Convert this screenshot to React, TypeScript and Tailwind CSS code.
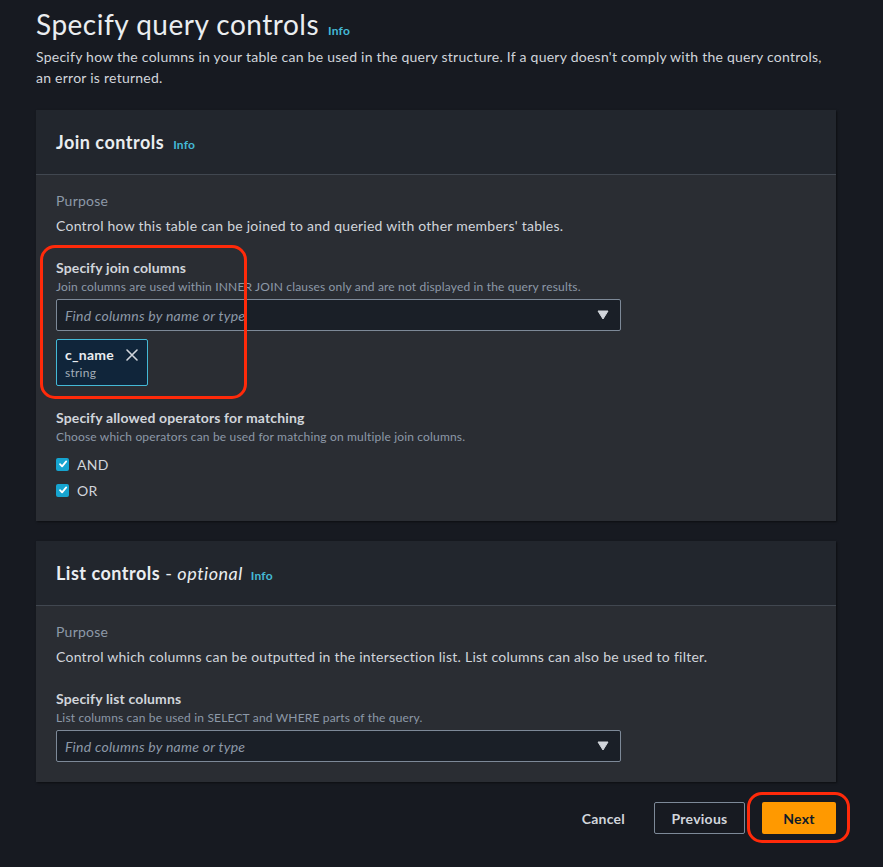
import React from "react";

const font = { fontFamily: "Lato, 'Open Sans', Arial, sans-serif" };

function Info({ ml = "ml-[9px]" }: { ml?: string }) {
  return <span className={`text-[12px] leading-none font-bold tracking-[0.2px] text-[#44b9d6] ${ml}`}>Info</span>;
}

function Caret() {
  return (
    <svg width="12" height="10" viewBox="0 0 12 10" className="text-[#d1d5db]">
      <path d="M1 1 H11 L6 9 Z" fill="currentColor" stroke="currentColor" strokeWidth="1" strokeLinejoin="round" />
    </svg>
  );
}

function Select() {
  return (
    <div className="h-8 w-[565px] border border-[#7d8998] bg-[#1a1f27] rounded-[2px] flex items-center justify-between pl-2 pr-[11px]">
      <span className="italic text-[14px] text-[#8d99a8]">Find columns by name or type</span>
      <Caret />
    </div>
  );
}

function Check({ label }: { label: string }) {
  return (
    <div className="flex items-center h-[22px] gap-[8px]">
      <div className="w-[13px] h-[13px] bg-[#16a4d0] rounded-[2px] flex items-center justify-center">
        <svg width="10" height="10" viewBox="0 0 10 10">
          <path d="M2 5.2 L4.1 7.4 L8.2 2.4" fill="none" stroke="white" strokeWidth="1.8" strokeLinecap="round" strokeLinejoin="round" />
        </svg>
      </div>
      <span className="text-[14px] text-[#d1d5db]">{label}</span>
    </div>
  );
}

export default function App() {
  return (
    <div style={font} className="min-h-[867px] w-[883px] bg-[#171a21] pl-9 pr-[47px] pt-[6px] text-[#d1d5db] tracking-[0.25px]">
      <h1 className="text-[28px] leading-[36px] text-[#eaedf0] font-normal tracking-[0.5px]">
        Specify query controls<Info />
      </h1>
      <p className="mt-[4px] text-[14px] leading-[21px] text-[#d1d5db]">
        Specify how the columns in your table can be used in the query structure. If a query doesn't comply with the query controls, an error is returned.
      </p>

      {/* Join controls */}
      <div className="mt-[22px] w-[800px] shadow-[1px_1px_2px_rgba(0,0,0,0.5)]">
        <div className="bg-[#22262d] px-5 py-[21px] border-b border-[#414750]">
          <h2 className="text-[18px] leading-[22px] font-bold text-[#eaedf0] tracking-[0.5px]">
            Join controls<Info />
          </h2>
        </div>
        <div className="bg-[#2a2d33] px-5 pt-[15px] pb-5 relative">
          <div className="text-[14px] leading-[22px] text-[#8d99a8]">Purpose</div>
          <div className="mt-[3px] text-[14px] leading-[22px] text-[#d1d5db]">
            Control how this table can be joined to and queried with other members' tables.
          </div>
          <div className="mt-5 text-[14px] leading-[22px] font-bold tracking-[0.15px] text-[#d1d5db]">Specify join columns</div>
          <div className="text-[12px] leading-[16px] tracking-[0.17px] text-[#8d99a8]">
            Join columns are used within INNER JOIN clauses only and are not displayed in the query results.
          </div>
          <div className="mt-1">
            <Select />
          </div>
          <div className="mt-2 w-[92px] h-[47px] border border-[#44b9d6] bg-[#10253a] rounded-[2px] px-2 pt-[4px]">
            <div className="flex items-center justify-between">
              <span className="text-[14px] leading-[22px] font-bold text-[#eaedf0]">c_name</span>
              <svg width="14" height="14" viewBox="0 0 14 14">
                <path d="M2 2 L12 12 M12 2 L2 12" stroke="#d1d5db" strokeWidth="1.6" strokeLinecap="round" />
              </svg>
            </div>
            <div className="text-[12px] leading-[14px] text-[#a4aeb8]">string</div>
          </div>
          <div className="mt-[21px] text-[14px] leading-[22px] font-bold tracking-[0.15px] text-[#d1d5db]">Specify allowed operators for matching</div>
          <div className="text-[12px] leading-[16px] tracking-[0.17px] text-[#8d99a8]">
            Choose which operators can be used for matching on multiple join columns.
          </div>
          <div className="mt-2 flex flex-col gap-1">
            <Check label="AND" />
            <Check label="OR" />
          </div>
          <div className="absolute left-[4px] top-[70px] w-[207px] h-[154px] border-[3px] border-[#ff2a0a] rounded-[15px] pointer-events-none" />
        </div>
      </div>

      {/* List controls */}
      <div className="mt-5 w-[800px] shadow-[1px_1px_2px_rgba(0,0,0,0.5)]">
        <div className="bg-[#22262d] px-5 py-[21px] border-b border-[#414750]">
          <h2 className="text-[18px] leading-[22px] font-bold text-[#eaedf0] tracking-[0.5px]">
            List controls<span className="font-normal mx-[5px]">-</span><span className="italic font-normal">optional</span><Info ml="ml-[8px]" />
          </h2>
        </div>
        <div className="bg-[#2a2d33] px-5 pt-[15px] pb-5">
          <div className="text-[14px] leading-[22px] text-[#8d99a8]">Purpose</div>
          <div className="mt-[3px] text-[14px] leading-[22px] text-[#d1d5db]">
            Control which columns can be outputted in the intersection list. List columns can also be used to filter.
          </div>
          <div className="mt-5 text-[14px] leading-[22px] font-bold tracking-[0.15px] text-[#d1d5db]">Specify list columns</div>
          <div className="text-[12px] leading-[16px] tracking-[0.17px] text-[#8d99a8]">
            List columns can be used in SELECT and WHERE parts of the query.
          </div>
          <div className="mt-1">
            <Select />
          </div>
        </div>
      </div>

      {/* Buttons */}
      <div className="mt-5 w-[800px] flex justify-end items-center">
        <button className="h-8 px-5 text-[14px] font-bold text-[#d1d5db]">Cancel</button>
        <button className="ml-[9px] h-8 w-[91px] border border-[#7d8998] rounded-[2px] text-[14px] font-bold text-[#d1d5db]">Previous</button>
        <div className="relative ml-[17px]">
          <button className="h-8 w-[74px] bg-[#ff9900] rounded-[2px] text-[14px] font-bold text-[#0f1b2a]">Next</button>
          <div className="absolute -left-[15px] -top-[10px] w-[103px] h-[51px] border-[3px] border-[#ff2a0a] rounded-[15px] pointer-events-none" />
        </div>
      </div>
    </div>
  );
}
